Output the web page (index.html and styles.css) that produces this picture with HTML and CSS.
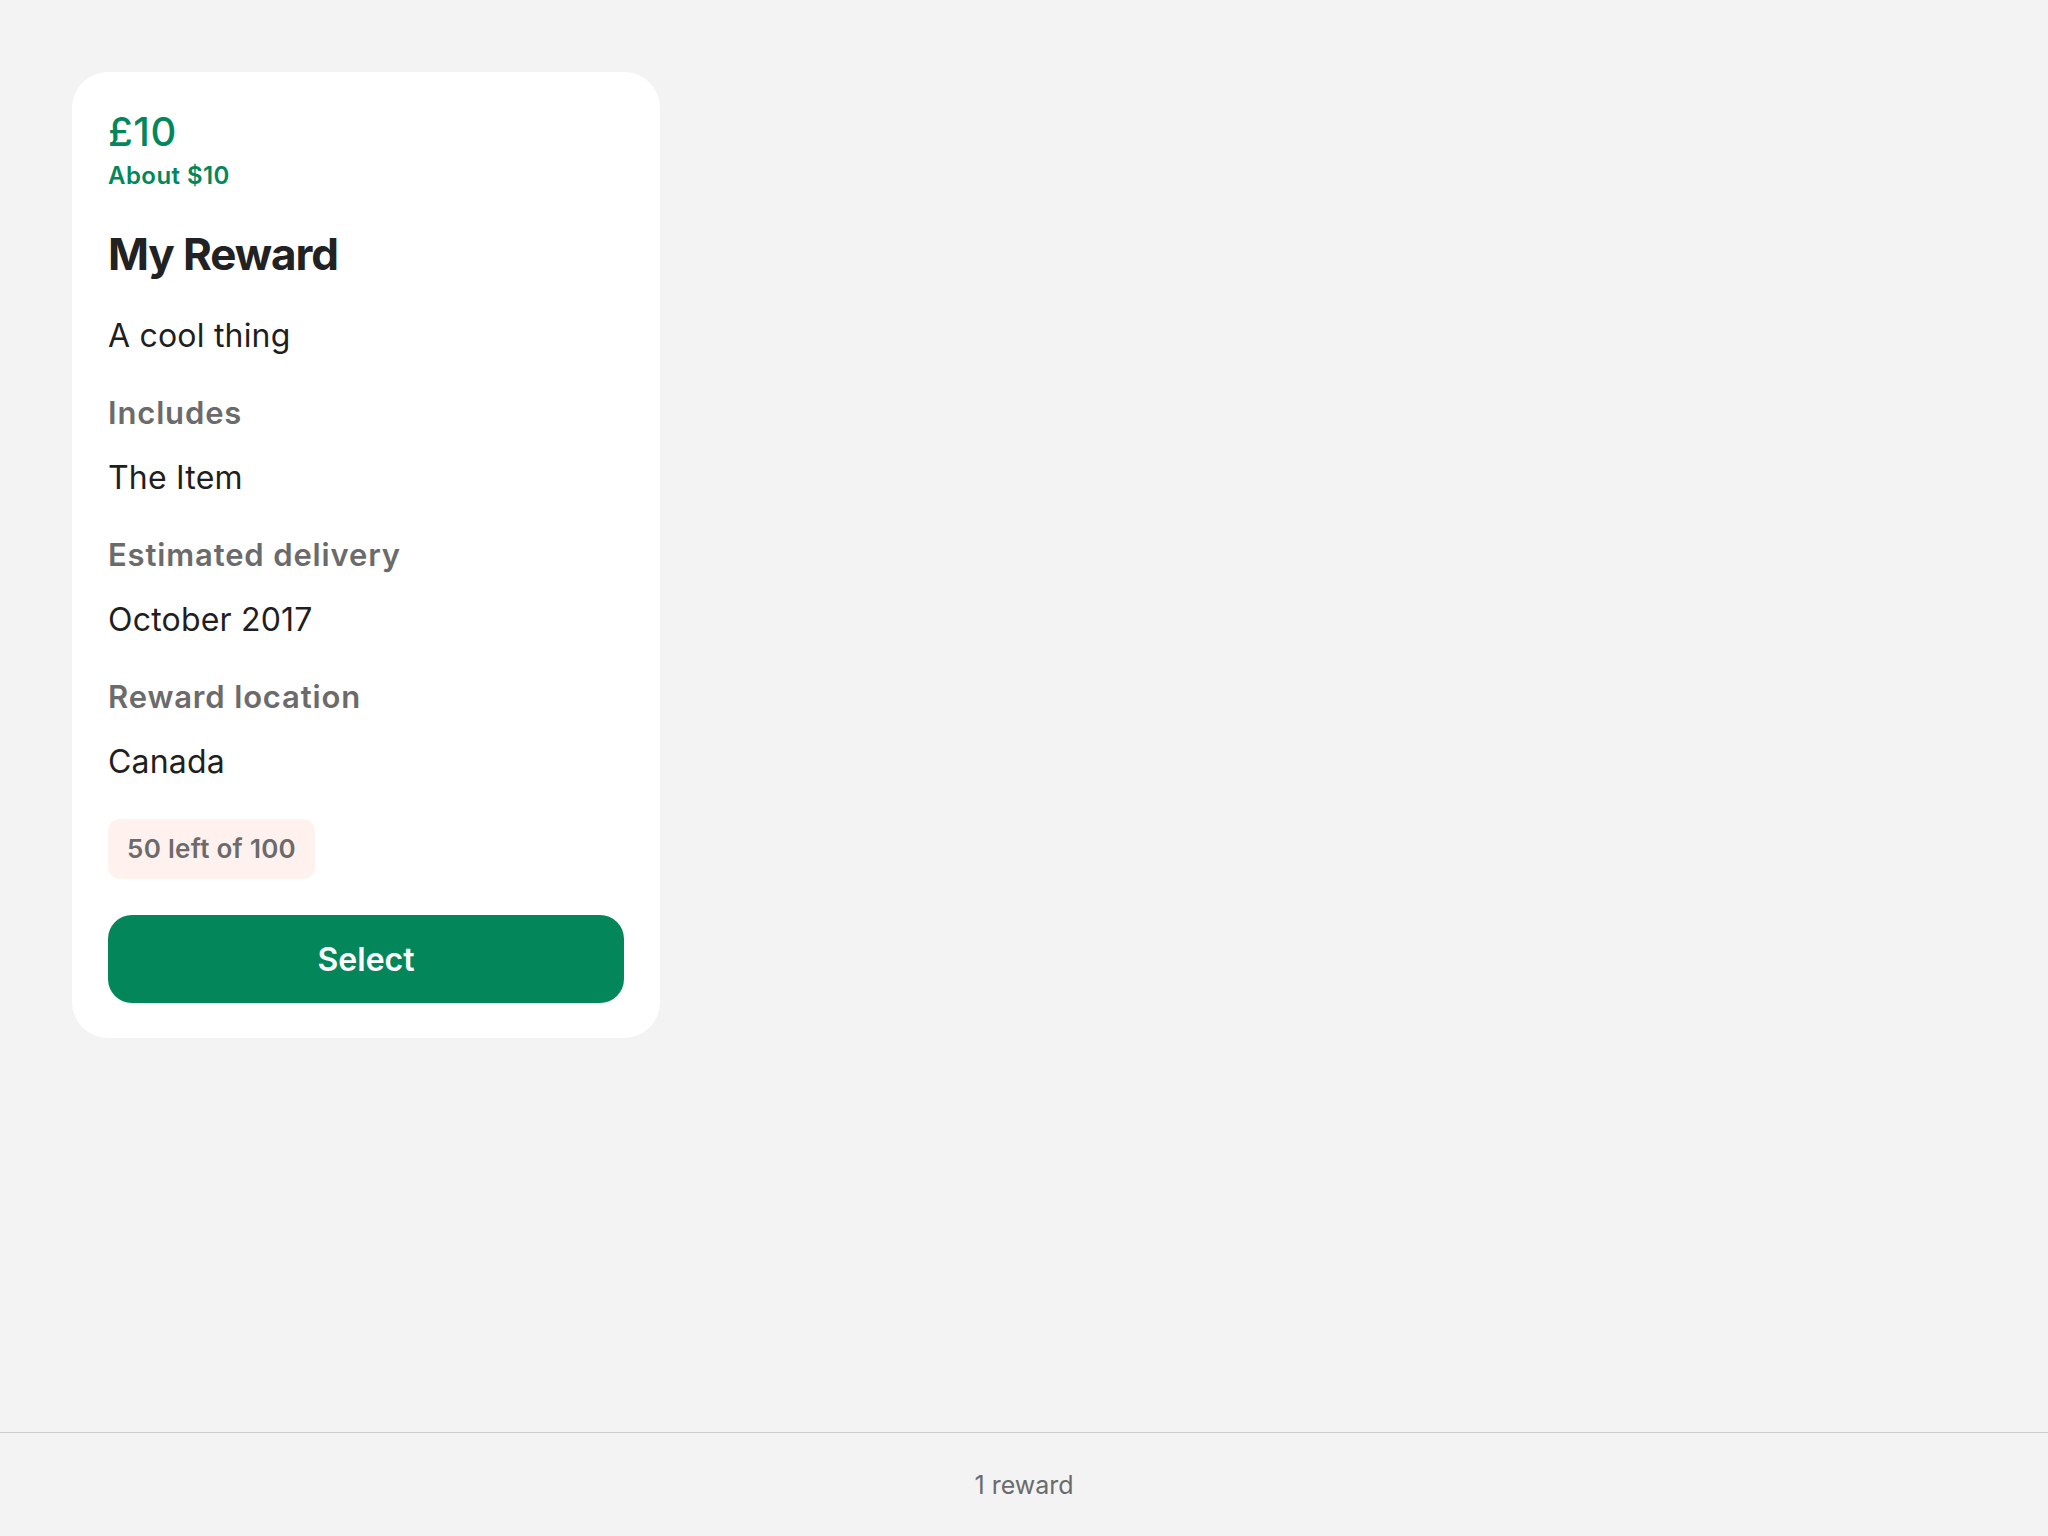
FILE: index.html
```html
<!DOCTYPE html>
<html lang="en">
<head>
<meta charset="utf-8">
<title>Rewards</title>
<link rel="stylesheet" href="styles.css">
</head>
<body>
<div class="page">
  <main class="main">
    <section class="card">
      <div class="price">£10</div>
      <div class="converted">About $10</div>
      <h1 class="title">My Reward</h1>
      <p class="value first">A cool thing</p>
      <h2 class="label">Includes</h2>
      <p class="value">The Item</p>
      <h2 class="label">Estimated delivery</h2>
      <p class="value">October 2017</p>
      <h2 class="label">Reward location</h2>
      <p class="value">Canada</p>
      <div class="badge-row"><span class="badge">50 left of 100</span></div>
      <button class="select">Select</button>
    </section>
  </main>
  <footer class="footer">1 reward</footer>
</div>
</body>
</html>
```

FILE: styles.css
```css
* { box-sizing: border-box; }
html, body { margin: 0; padding: 0; }
body {
  background: #f3f3f3;
  font-family: Inter, "Noto Sans", "Liberation Sans", sans-serif;
  color: #1f1f1f;
}
.page {
  height: 100vh;
  display: flex;
  flex-direction: column;
}
.main {
  flex: 1;
  padding: 72px;
}
.card {
  width: 588px;
  background: #ffffff;
  border-radius: 36px;
  padding: 36px 36px 35px;
  display: flex;
  flex-direction: column;
}
.price {
  font-size: 40px;
  line-height: 48px;
  font-weight: 500;
  color: #03875a;
  letter-spacing: 0.5px;
}
.converted {
  font-size: 24px;
  line-height: 40px;
  font-weight: 600;
  color: #03875a;
  letter-spacing: 0.45px;
}
.title {
  margin: 32px 0 0;
  font-size: 44px;
  line-height: 52px;
  font-weight: 700;
  color: #222222;
  letter-spacing: -1.1px;
}
.value {
  margin: 25px 0 0;
  font-size: 32px;
  line-height: 40px;
  font-weight: 400;
  color: #1f1f1f;
  letter-spacing: 0.2px;
}
.value.first { margin-top: 36px; }
.label {
  margin: 37px 0 0;
  font-size: 31px;
  line-height: 40px;
  font-weight: 600;
  color: #6b6b6b;
  letter-spacing: 0.85px;
}
.badge-row {
  margin-top: 37px;
  display: flex;
}
.badge {
  height: 60px;
  line-height: 60px;
  padding: 0 19px;
  border-radius: 12px;
  background: #fff1ed;
  color: #6b6b6b;
  font-size: 26px;
  font-weight: 600;
  letter-spacing: 0.3px;
}
.select {
  margin-top: 36px;
  height: 88px;
  border: none;
  border-radius: 24px;
  background: #03875a;
  color: #ffffff;
  font-family: inherit;
  font-size: 32px;
  font-weight: 600;
  padding: 0;
}
.footer {
  height: 104px;
  border-top: 1px solid #cdcdcd;
  display: flex;
  align-items: center;
  justify-content: center;
  font-size: 25px;
  color: #6b6b6b;
}
```
